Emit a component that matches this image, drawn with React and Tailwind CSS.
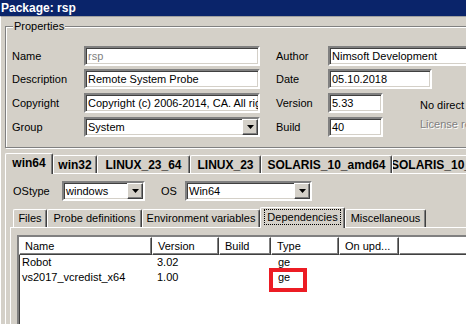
import React from "react";

const sunken =
  "bg-white border-2 border-t-[#808080] border-l-[#808080] border-r-white border-b-white shadow-[inset_1px_1px_0_#404040,inset_-1px_-1px_0_#d4d0c8]";

function Field({ className = "", children, textClass = "" }) {
  return (
    <div className={`h-[20px] ${sunken} pl-[2px] leading-[16px] whitespace-nowrap overflow-hidden ${textClass} ${className}`}>
      {children}
    </div>
  );
}

function DropBtn() {
  return (
    <div className="w-[16px] h-[16px] shrink-0 bg-[#d4d0c8] border border-t-white border-l-white border-r-[#404040] border-b-[#404040] shadow-[inset_-1px_-1px_0_#808080] flex items-center justify-center">
      <svg width="7" height="4" viewBox="0 0 7 4">
        <polygon points="0,0 7,0 3.5,4" fill="#000" />
      </svg>
    </div>
  );
}

function Combo({ className = "", children }) {
  return (
    <div className={`h-[20px] ${sunken} flex items-stretch ${className}`}>
      <div className="flex-1 pl-[2px] leading-[16px] whitespace-nowrap overflow-hidden">{children}</div>
      <DropBtn />
    </div>
  );
}

function OsTab({ w, selected, children }) {
  return (
    <div
      className={`${w} shrink-0 flex items-center justify-center font-bold text-[12px] whitespace-nowrap overflow-hidden bg-[#d4d0c8] border-t border-l border-white border-r border-r-[#404040] shadow-[inset_-1px_0_0_#808080] rounded-t-[2px] ${
        selected ? "h-[21px] -mb-[1px] relative z-10 pb-[2px]" : "h-[18px]"
      }`}
    >
      {children}
    </div>
  );
}

function InTab({ w, selected, children }) {
  return (
    <div
      className={`${w} shrink-0 flex items-center justify-center whitespace-nowrap overflow-hidden bg-[#d4d0c8] border-t border-l border-white border-r border-r-[#404040] shadow-[inset_-1px_0_0_#808080] rounded-t-[2px] ${
        selected ? "h-[21px] -mb-[1px] relative z-10 pb-[2px]" : "h-[18px]"
      }`}
    >
      {selected ? (
        <span className="outline outline-1 outline-dotted outline-black px-[2px] leading-[14px]">{children}</span>
      ) : (
        children
      )}
    </div>
  );
}

function Head({ w, children, pl = "pl-[5px]" }) {
  return (
    <div className={`${w} shrink-0 h-[18px] ${pl} leading-[16px] whitespace-nowrap overflow-hidden border border-t-white border-l-white border-r-[#404040] border-b-[#404040] shadow-[inset_-1px_-1px_0_#808080]`}>
      {children}
    </div>
  );
}

export default function App() {
  return (
    <div className="w-[466px] h-[324px] overflow-hidden bg-[#d4d0c8] text-[11px] text-black font-['Liberation_Sans',Arial,sans-serif]">
      <div className="h-[16px] bg-[#0a246a] text-white font-bold text-[12px] leading-[16px] pl-[1px]">Package: rsp</div>
      <div className="h-[308px] border-t border-t-[#a0a0a0] border-l border-l-white">
        {/* Properties group */}
        <div className="relative ml-[4px] mt-[9px] h-[122px] w-[480px] border border-[#808080] shadow-[inset_1px_1px_0_#fff,1px_1px_0_#fff] pt-[19px]">
          <div className="absolute -top-[8px] left-[7px] px-[1px] bg-[#d4d0c8] leading-[14px]">Properties</div>
          <div className="flex">
            <div className="flex flex-col">
              <div className="flex items-center h-[20px]">
                <div className="w-[78px] pl-[6px]">Name</div>
                <Field className="w-[176px]" textClass="text-[#808080]">rsp</Field>
              </div>
              <div className="flex items-center h-[20px] mt-[3px]">
                <div className="w-[78px] pl-[6px]">Description</div>
                <Field className="w-[176px]">Remote System Probe</Field>
              </div>
              <div className="flex items-center h-[20px] mt-[4px]">
                <div className="w-[78px] pl-[6px]">Copyright</div>
                <Field className="w-[176px]">Copyright (c) 2006-2014, CA. All rights reserved.</Field>
              </div>
              <div className="flex items-center h-[20px] mt-[4px]">
                <div className="w-[78px] pl-[6px]">Group</div>
                <Combo className="w-[176px]">System</Combo>
              </div>
            </div>
            <div className="flex flex-col ml-[16px]">
              <div className="flex items-center h-[20px]">
                <div className="w-[52px]">Author</div>
                <Field className="w-[160px]">Nimsoft Development</Field>
              </div>
              <div className="flex items-center h-[20px] mt-[3px]">
                <div className="w-[52px]">Date</div>
                <Field className="w-[104px]">05.10.2018</Field>
              </div>
              <div className="flex mt-[4px]">
                <div className="flex flex-col">
                  <div className="flex items-center h-[20px]">
                    <div className="w-[52px]">Version</div>
                    <Field className="w-[55px]">5.33</Field>
                  </div>
                  <div className="flex items-center h-[20px] mt-[4px]">
                    <div className="w-[52px]">Build</div>
                    <Field className="w-[55px]">40</Field>
                  </div>
                </div>
                <div className="ml-[37px] flex flex-col whitespace-nowrap leading-[13px]">
                  <div className="mt-[6px]">No direct access</div>
                  <div className="mt-[6px] text-[#808080] [text-shadow:1px_1px_0_#fff]">License required</div>
                </div>
              </div>
            </div>
          </div>
        </div>

        {/* OS tabs */}
        <div className="ml-[4px] mt-[5px]">
          <div className="flex items-end h-[20px]">
            <OsTab w="w-[48px]" selected>win64</OsTab>
            <OsTab w="w-[44px]">win32</OsTab>
            <OsTab w="w-[93px]">LINUX_23_64</OsTab>
            <OsTab w="w-[71px]">LINUX_23</OsTab>
            <OsTab w="w-[131px]">SOLARIS_10_amd64</OsTab>
            <OsTab w="w-[110px]">SOLARIS_10_sparc</OsTab>
          </div>
          <div className="w-[480px] h-[160px] border-t border-l border-white pt-[7px]">
            <div className="flex items-center h-[20px]">
              <div className="w-[56px] pl-[7px]">OStype</div>
              <Combo className="w-[83px]">windows</Combo>
              <div className="w-[24px] ml-[16px]">OS</div>
              <Combo className="w-[127px]">Win64</Combo>
            </div>
            {/* inner tabs */}
            <div className="ml-[4px] mt-[6px]">
              <div className="flex items-end h-[20px] pl-[3px]">
                <InTab w="w-[34px]">Files</InTab>
                <InTab w="w-[95px]">Probe definitions</InTab>
                <InTab w="w-[118px]">Environment variables</InTab>
                <InTab w="w-[85px]" selected>Dependencies</InTab>
                <InTab w="w-[81px]">Miscellaneous</InTab>
              </div>
              <div className="w-[470px] h-[120px] border-t border-l border-white pt-[7px] pl-[6px]">
                <div className={`w-[460px] h-[100px] ${sunken}`}>
                  <div className="flex">
                    <Head w="w-[133px]" pl="pl-[5px]">Name</Head>
                    <Head w="w-[67px]">Version</Head>
                    <Head w="w-[52px]">Build</Head>
                    <Head w="w-[68px]">Type</Head>
                    <Head w="w-[60px]">On upd...</Head>
                    <Head w="w-[80px]">{""}</Head>
                  </div>
                  <div className="flex h-[15px] leading-[15px]">
                    <div className="w-[133px] pl-[3px]">Robot</div>
                    <div className="w-[67px] pl-[5px]">3.02</div>
                    <div className="w-[52px]"></div>
                    <div className="w-[68px] pl-[7px]">ge</div>
                  </div>
                  <div className="flex h-[15px] leading-[15px]">
                    <div className="w-[133px] pl-[3px]">vs2017_vcredist_x64</div>
                    <div className="w-[67px] pl-[5px]">1.00</div>
                    <div className="w-[52px]"></div>
                    <div className="w-[68px] pl-[7px] relative">
                      ge
                      <div className="absolute left-[-2px] top-[-2px] w-[38px] h-[24px] border-[4px] border-[#ec1c24]"></div>
                    </div>
                  </div>
                </div>
              </div>
            </div>
          </div>
        </div>
      </div>
    </div>
  );
}
